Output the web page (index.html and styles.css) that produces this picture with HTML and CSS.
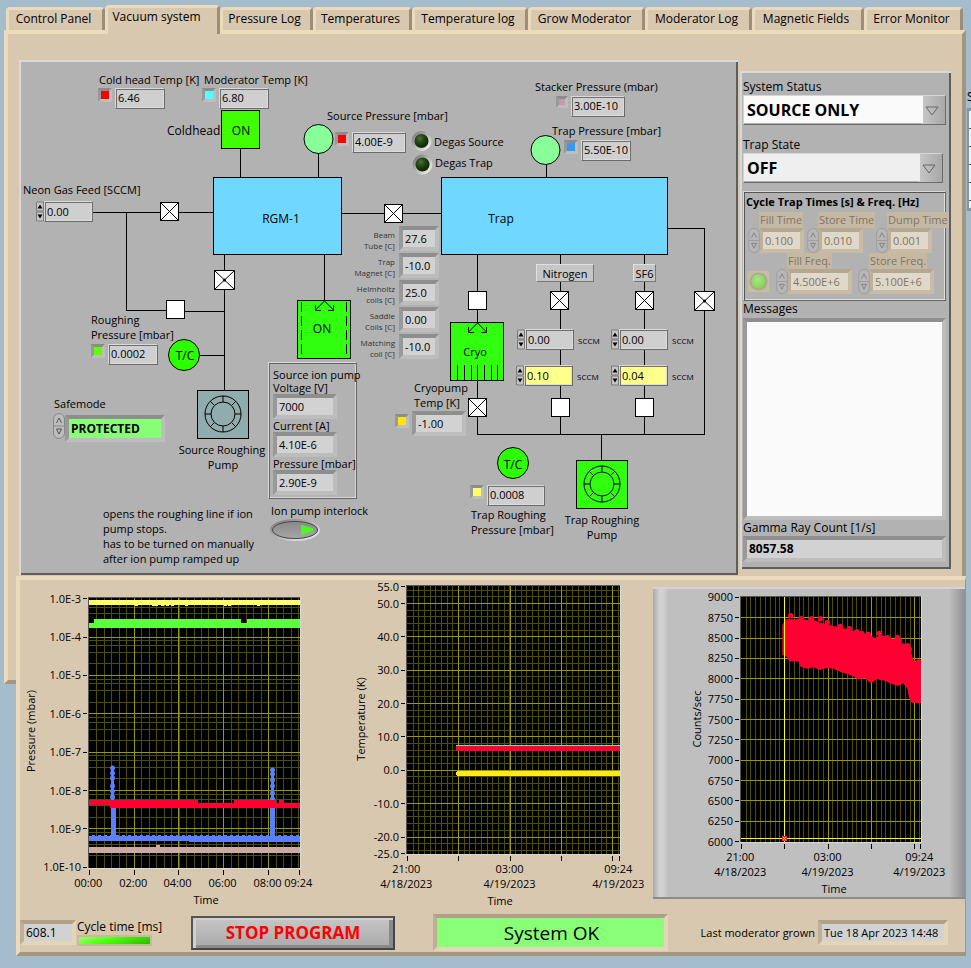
FILE: index.html
```html
<!DOCTYPE html>
<html lang="en">
<head>
<meta charset="utf-8">
<title>Vacuum system</title>
<link rel="stylesheet" href="styles.css">
</head>
<body>
<svg width="0" height="0" class="defs" aria-hidden="true">
  <defs>
    <symbol id="valve" viewBox="0 0 20 20"><rect class="crisp" x=".5" y=".5" width="18" height="18" fill="#fff" stroke="#000"/></symbol>
    <symbol id="valve-x" viewBox="0 0 20 20"><rect class="crisp" x=".5" y=".5" width="18" height="18" fill="#fff" stroke="#000"/><path d="M1 1 18 18M18 1 1 18" stroke="#000"/></symbol>
    <symbol id="valve-hub" viewBox="0 0 22 22"><rect class="crisp" x=".5" y=".5" width="20" height="19" fill="#fff" stroke="#000"/><path d="M1 1 20 19M20 1 1 19" stroke="#000"/><circle cx="10.500" cy="10" r="1.500"/></symbol>
    <symbol id="rotor" viewBox="-20 -20 40 40"><g fill="none" stroke="#000"><circle r="18"/><circle r="12"/><path d="M0-18V-12M0 18V12M-18 0H-12M18 0H12M-13-13-9-9M13-13 9-9M-13 13-9 9M13 13 9 9"/></g></symbol>
    <symbol id="spin" viewBox="0 0 12 26"><rect x=".5" y=".5" width="11" height="25" rx="5.5" fill="#bcbcbc" stroke="#888"/><path d="M1 13H11" stroke="#888"/><path d="M3.500 10 6 5 8.500 10M3.500 16 6 21 8.500 16Z" fill="none" stroke="#555"/></symbol>
    <symbol id="step" viewBox="0 0 8 20"><path d="M0 0H8V20H0Z" fill="#c6c6c6"/><path d="M.5.5H7.500V9.500H.5ZM.5 10.500H7.500V19.500H.5Z" fill="none" stroke="#777"/><path d="M1.500 7 4 3 6.500 7ZM1.500 13 4 17 6.500 13Z"/></symbol>
    <radialGradient id="led-dark" cx=".4" cy=".35"><stop offset="0" stop-color="#4c7040"/><stop offset=".5" stop-color="#24480f"/><stop offset="1" stop-color="#102c04"/></radialGradient>
    <radialGradient id="led-on" cx=".45" cy=".4"><stop offset="0" stop-color="#a8e880"/><stop offset="1" stop-color="#86d25c"/></radialGradient>
    <linearGradient id="rim" x1="0" y1="0" x2="1" y2="1"><stop offset="0" stop-color="#777"/><stop offset="1" stop-color="#f4f4f4"/></linearGradient>
    <linearGradient id="knob" x1="0" y1="0" x2="0" y2="1"><stop offset="0" stop-color="#858585"/><stop offset="1" stop-color="#aaa"/></linearGradient>
  </defs>
</svg>

<div class="window">
  <nav class="tabs" role="tablist">
    <button type="button" role="tab">Control Panel</button>
    <button type="button" role="tab" class="active" aria-selected="true">Vacuum system</button>
    <button type="button" role="tab">Pressure Log</button>
    <button type="button" role="tab">Temperatures</button>
    <button type="button" role="tab">Temperature log</button>
    <button type="button" role="tab">Grow Moderator</button>
    <button type="button" role="tab">Moderator Log</button>
    <button type="button" role="tab">Magnetic Fields</button>
    <button type="button" role="tab">Error Monitor</button>
  </nav>

  <main class="tab-page">
    <section class="schematic">
      <svg class="piping" viewBox="19 60 719 515" width="719" height="515">
        <g class="pipes">
          <path d="M240.500 148V178M318.500 153V178M93 212.500H213M126.500 212V310.500H170M184 311.500H224M342 213.500H441M224.500 254V391M324.500 254V301M199 355.500H224M546.500 164V178M667 228.500H704.500V434.500H477.500V254M560.500 254V434M644.500 254V434M601.500 434V460"/>
        </g>
        <g class="boxes">
          <rect x="221.500" y="110.500" width="38" height="38" fill="#40ff00"/>
          <rect x="213.500" y="177.500" width="128" height="77" fill="#70d8ff"/>
          <rect x="441.500" y="177.500" width="226" height="77" fill="#70d8ff"/>
          <rect x="297.500" y="300.500" width="53" height="58" fill="#30ff10"/>
          <rect x="197.500" y="390.500" width="51" height="48" fill="#90acac"/>
          <rect x="450.500" y="322.500" width="53" height="58" fill="#30ff10"/>
          <rect x="576.500" y="460.500" width="51" height="48" fill="#30ff10"/>
        </g>
        <g class="marks">
          <path d="M301.500 302V358M346.500 302V358" stroke-dasharray="10 4"/>
          <path d="M457.500 365V380M464.500 365V380M471.500 365V380M477.500 365V380M484.500 365V380M491.500 365V380M497.500 365V380"/>
        </g>
        <g class="arrows">
          <path d="M324.500 301 315.500 310M324.500 301 333.500 310M315.500 305V310.500H321M333.500 305V310.500H328"/>
          <path d="M477.500 323 468.500 332M477.500 323 486.500 332M468.500 327V332.500H474M486.500 327V332.500H481"/>
        </g>
        <g class="gauges">
          <circle cx="318.500" cy="139" r="14.500" fill="#88ff99"/>
          <circle cx="545.500" cy="150" r="14.500" fill="#88ff99"/>
          <circle cx="184" cy="355" r="15.500" fill="#2cff00"/>
          <circle cx="513" cy="463" r="15.500" fill="#2cff00"/>
        </g>
        <use href="#valve-x" x="160" y="202" width="20" height="20"/>
        <use href="#valve-x" x="384" y="204" width="20" height="20"/>
        <use href="#valve-hub" x="214" y="270" width="22" height="22"/>
        <use href="#valve" x="166" y="300" width="20" height="20"/>
        <use href="#valve" x="468" y="291" width="20" height="20"/>
        <use href="#valve-x" x="550" y="291" width="20" height="20"/>
        <use href="#valve-x" x="635" y="291" width="20" height="20"/>
        <use href="#valve-hub" x="694" y="291" width="22" height="22"/>
        <use href="#valve-x" x="468" y="398" width="20" height="20"/>
        <use href="#valve" x="551" y="398" width="20" height="20"/>
        <use href="#valve" x="635" y="398" width="20" height="20"/>
        <use href="#rotor" x="203" y="394" width="40" height="40"/>
        <use href="#rotor" x="582" y="464" width="40" height="40"/>
        <g stroke="url(#rim)" stroke-width="3" fill="url(#led-dark)"><circle cx="421.500" cy="141" r="8.500"/><circle cx="422.500" cy="164.500" r="8.500"/></g>
        <g class="names">
          <text class="big" x="167" y="135">Coldhead</text>
          <text class="big" x="241" y="135" text-anchor="middle">ON</text>
          <text class="big" x="281" y="223" text-anchor="middle">RGM-1</text>
          <text class="big" x="501" y="223" text-anchor="middle">Trap</text>
          <text class="big" x="322" y="333" text-anchor="middle">ON</text>
          <text x="475" y="356" text-anchor="middle">Cryo</text>
          <text class="big" x="185" y="360" text-anchor="middle">T/C</text>
          <text class="big" x="513" y="469" text-anchor="middle">T/C</text>
          <text x="434" y="146">Degas Source</text>
          <text x="435" y="167">Degas Trap</text>
          <text x="222" y="454" text-anchor="middle">Source Roughing</text>
          <text x="223" y="469" text-anchor="middle">Pump</text>
          <text x="602" y="524" text-anchor="middle">Trap Roughing</text>
          <text x="602" y="539" text-anchor="middle">Pump</text>
        </g>
      </svg>

      <label class="at l-cold" for="v-cold">Cold head Temp [K]</label>
      <div class="at reading r-cold"><i class="swatch red"></i><output id="v-cold" class="box">6.46</output></div>
      <label class="at l-mod" for="v-mod">Moderator Temp [K]</label>
      <div class="at reading r-mod"><i class="swatch cyan"></i><output id="v-mod" class="box">6.80</output></div>
      <label class="at l-src" for="v-src">Source Pressure [mbar]</label>
      <div class="at reading r-src"><i class="swatch red"></i><output id="v-src" class="box wide">4.00E-9</output></div>
      <label class="at l-stack" for="v-stack">Stacker Pressure (mbar)</label>
      <div class="at reading r-stack"><i class="swatch small mauve"></i><output id="v-stack" class="box wide">3.00E-10</output></div>
      <label class="at l-trap" for="v-trap">Trap Pressure [mbar]</label>
      <div class="at reading r-trap"><i class="swatch blue"></i><output id="v-trap" class="box">5.50E-10</output></div>
      <label class="at l-neon" for="v-neon">Neon Gas Feed [SCCM]</label>
      <div class="at stepper r-neon"><svg><use href="#step"/></svg><input id="v-neon" class="box" value="0.00"></div>
      <label class="at l-rough" for="v-rough">Roughing<br>Pressure [mbar]</label>
      <div class="at reading r-rough"><i class="swatch lime"></i><output id="v-rough" class="box">0.0002</output></div>
      <label class="at l-safe" for="v-safe">Safemode</label>
      <div class="at safe r-safe"><svg><use href="#spin"/></svg><input id="v-safe" class="well" value="PROTECTED"></div>

      <fieldset class="at ion">
        <div class="ion-title">Source ion pump</div>
        <label for="v-volt">Voltage [V]</label><output id="v-volt" class="well">7000</output>
        <label for="v-curr">Current [A]</label><output id="v-curr" class="well">4.10E-6</output>
        <label for="v-pres">Pressure [mbar]</label><output id="v-pres" class="well">2.90E-9</output>
      </fieldset>
      <label class="at l-lock" for="v-lock">Ion pump interlock</label>
      <button class="at lock" id="v-lock" type="button" aria-label="Ion pump interlock">
        <svg viewBox="0 0 50 22"><ellipse cx="25" cy="11" rx="24" ry="10" fill="url(#knob)" stroke="url(#rim)" stroke-width="2"/><ellipse cx="25" cy="11" rx="22.500" ry="8.500" fill="none" stroke="#4a4a4a"/><path d="M31 6 43 9V12L31 16Z" fill="#4df81c"/></svg>
      </button>

      <p class="at note">opens the roughing line if ion<br>pump stops.<br>has to be turned on manually<br>after ion pump ramped up</p>

      <div class="at coils">
        <label for="t1">Beam<br>Tube [C]</label><output id="t1" class="well">27.6</output>
        <label for="t2">Trap<br>Magnet [C]</label><output id="t2" class="well">-10.0</output>
        <label for="t3">Helmholtz<br>coils [C]</label><output id="t3" class="well">25.0</output>
        <label for="t4">Saddle<br>Coils [C]</label><output id="t4" class="well">0.00</output>
        <label for="t5">Matching<br>coil [C]</label><output id="t5" class="well">-10.0</output>
      </div>

      <button type="button" class="at gas nitrogen">Nitrogen</button>
      <button type="button" class="at gas sf6">SF6</button>
      <div class="at stepper n-read"><svg><use href="#step"/></svg><input id="n1" class="box" value="0.00"><label for="n1">SCCM</label></div>
      <div class="at stepper n-set"><svg><use href="#step"/></svg><input id="n2" class="box set" value="0.10"><label for="n2">SCCM</label></div>
      <div class="at stepper s-read"><svg><use href="#step"/></svg><input id="s1" class="box" value="0.00"><label for="s1">SCCM</label></div>
      <div class="at stepper s-set"><svg><use href="#step"/></svg><input id="s2" class="box set" value="0.04"><label for="s2">SCCM</label></div>

      <label class="at l-cryo" for="v-cryo">Cryopump<br>Temp [K]</label>
      <div class="at reading r-cryo"><i class="swatch gold"></i><output id="v-cryo" class="well">-1.00</output></div>
      <div class="at reading r-tr"><i class="swatch straw"></i><output id="v-tr" class="box wider">0.0008</output></div>
      <label class="at l-tr" for="v-tr">Trap Roughing<br>Pressure [mbar]</label>
    </section>

    <aside class="status">
      <label for="sys">System Status</label>
      <div class="drop"><select id="sys"><option>SOURCE ONLY</option></select><svg viewBox="0 0 14 10"><path d="M1 1H13L7 9Z"/></svg></div>
      <label class="spaced" for="state">Trap State</label>
      <div class="drop short"><select id="state"><option>OFF</option></select><svg viewBox="0 0 14 10"><path d="M1 1H13L7 9Z"/></svg></div>
      <fieldset class="cycle" disabled>
        <h2>Cycle Trap Times [s] &amp; Freq. [Hz]</h2>
        <div class="cycle-row times">
          <div class="dim"><label for="c1">Fill Time</label><svg><use href="#spin"/></svg><input id="c1" class="well" value="0.100"></div>
          <div class="dim"><label for="c2">Store Time</label><svg><use href="#spin"/></svg><input id="c2" class="well" value="0.010"></div>
          <div class="dim"><label for="c3">Dump Time</label><svg><use href="#spin"/></svg><input id="c3" class="well" value="0.001"></div>
        </div>
        <div class="cycle-row freqs">
          <svg class="led" viewBox="0 0 22 22"><path d="M0 0H22V22H0Z" fill="#c6bda8"/><circle cx="11" cy="11" r="8.500" fill="url(#led-on)" stroke="#b3a78e" stroke-width="2"/></svg>
          <div class="dim"><label for="c4">Fill Freq.</label><svg><use href="#spin"/></svg><input id="c4" class="well" value="4.500E+6"></div>
          <div class="dim"><label for="c5">Store Freq.</label><svg><use href="#spin"/></svg><input id="c5" class="well" value="5.100E+6"></div>
        </div>
      </fieldset>
      <label for="msg">Messages</label>
      <textarea id="msg" class="well"></textarea>
      <label for="gamma">Gamma Ray Count [1/s]</label>
      <output id="gamma" class="well gamma">8057.58</output>
    </aside>
  </main>

  <section class="lower">
    <div class="charts">
      <svg id="pressure" class="chart" viewBox="20 580 330 330"></svg>
      <svg id="temperature" class="chart" viewBox="350 580 303 330"></svg>
      <div class="counts-panel"><svg id="counts" class="chart" viewBox="653 587 312 312"></svg></div>
    </div>
    <footer class="bar">
      <output id="cyc" class="well cyc">608.1</output>
      <div class="cycle-time"><label for="cyc">Cycle time [ms]</label><i class="lamp"></i></div>
      <button type="button" class="stop">STOP PROGRAM</button>
      <output class="well ok">System OK</output>
      <label for="grown" class="grown-label">Last moderator grown</label>
      <output id="grown" class="well grown">Tue 18 Apr 2023 14:48</output>
    </footer>
  </section>

  <div class="offside"><span>S</span><i></i></div>
</div>
<script src="charts.js"></script>
</body>
</html>
```
FILE: charts.js
```js
const NS = "http://www.w3.org/2000/svg";
const MAJOR = "#999900", MINOR = "#4f4f00";

function el(parent, name, attrs, text) {
  const n = document.createElementNS(NS, name);
  for (const k in attrs) n.setAttribute(k, attrs[k]);
  if (text) n.textContent = text;
  parent.appendChild(n);
  return n;
}
const bar = (s, x1, x2, y1, y2, fill) =>
  el(s, "rect", { x: x1, y: y1, width: x2 - x1, height: y2 - y1, fill });

function frame(svg, c) {
  const { x, y, r, b } = c;
  bar(svg, x - 1, r + 1, y - 1, b + 1, "#d8d8d8");
  bar(svg, x - 1, r, y - 1, b, "#555");
  bar(svg, x, r, y, b, "#000");
  const v = (p, col) => bar(svg, Math.floor(p), Math.floor(p) + 1, y, b, col);
  const h = (p, col) => bar(svg, x, r, Math.floor(p), Math.floor(p) + 1, col);
  c.yMinor.forEach(p => h(p, MINOR));
  for (let p = c.x0 + c.xMinor; p < r - 1; p += c.xMinor) v(p, MINOR);
  c.xMajor.forEach(p => v(p, MAJOR));
  c.yTicks.forEach(([p]) => { if (p > y + 3 && p < b - 3) h(p, MAJOR); });
  c.yTicks.forEach(([p, t]) => {
    bar(svg, x - 6, x - 2, Math.floor(p), Math.floor(p) + 1, "#000");
    el(svg, "text", { x: x - 8, y: Math.round(p) + 4, "text-anchor": "end" }, t);
  });
  c.xTicks.forEach(([p, a, d]) => {
    bar(svg, Math.floor(p), Math.floor(p) + 1, b + 2, b + 7, "#000");
    if (a) el(svg, "text", { x: p - 1, y: b + 19, "text-anchor": "middle" }, a);
    if (d) el(svg, "text", { x: p - 1, y: b + 34, "text-anchor": "middle" }, d);
  });
  el(svg, "text", { x: c.title[0], y: c.title[1], "text-anchor": "middle" }, "Time");
  el(svg, "text", { transform: `translate(${c.side[0]} ${c.side[1]}) rotate(-90)`, "text-anchor": "middle", class: "axis" }, c.sideText);
}

/* Pressure, logarithmic */
{
  const s = document.getElementById("pressure");
  const yTicks = [], yMinor = [];
  for (let i = 0; i < 8; i++) {
    const p = 598.7 + i * 38.37;
    yTicks.push([p, "1.0E-" + (i + 3)]);
    if (i < 7) [2, 4, 6, 8].forEach(m => yMinor.push(p + 38.37 * (1 - Math.log10(m))));
  }
  frame(s, { x: 89, y: 598, r: 300, b: 868, x0: 89.3, xMinor: 7.48, xMajor: [134.3, 178.5, 223.5, 268.5], yTicks, yMinor,
    xTicks: [[89.3, "00:00"], [134.3, "02:00"], [178.5, "04:00"], [223.5, "06:00"], [268.5, "08:00"], [299.3, "09:24"]],
    title: [206, 904], side: [35, 731], sideText: "Pressure (mbar)" });
  bar(s, 89, 300, 600, 605, "#ffff66");
  [135, 152, 155, 161, 166, 171, 185, 224, 228, 257].forEach(x => bar(s, x, x + 3, 605, 606, "#ffff66"));
  bar(s, 89, 300, 623, 628, "#5cff3c");
  bar(s, 94, 241, 619, 624, "#5cff3c");
  bar(s, 247, 300, 619, 624, "#5cff3c");
  bar(s, 89, 300, 847, 853, "#cbaba3");
  bar(s, 156, 160, 845, 847, "#cbaba3");
  bar(s, 89, 300, 836, 841, "#5a80ff");
  bar(s, 189, 300, 840, 842, "#5a80ff");
  for (let x = 92; x < 298; x += 6) bar(s, x, x + 3, 835, 836, "#5a80ff");
  bar(s, 111, 114, 768, 800, "#5a80ff");
  bar(s, 111, 116, 805, 838, "#5a80ff");
  bar(s, 271, 274, 770, 812, "#5a80ff");
  bar(s, 270, 275, 800, 838, "#5a80ff");
  [[112.5, [768, 773, 778, 786, 791, 797]], [272.5, [770, 774, 780, 786, 793, 799, 814, 823, 831]]].forEach(([x, ys]) =>
    ys.forEach(cy => el(s, "circle", { cx: x, cy, r: 2.5, fill: "#5a80ff" })));
  bar(s, 89, 198, 800, 805, "#ff0033");
  bar(s, 110, 300, 803, 808, "#ff0033");
  bar(s, 234, 276, 800, 805, "#ff0033");
  bar(s, 279, 284, 800, 805, "#ff0033");
}

/* Temperature */
{
  const s = document.getElementById("temperature");
  const at = v => 770.3 - v * 3.335;
  const yTicks = [55, 50, 40, 30, 20, 10, 0, -10, -20, -25].map(v => [at(v), v.toFixed(1)]);
  const yMinor = [];
  for (let v = -24; v <= 54; v += 2) yMinor.push(at(v));
  frame(s, { x: 407, y: 586, r: 620, b: 854, x0: 407.3, xMinor: 5.7, xMajor: [458.5, 510.5, 561.5, 612.5], yTicks, yMinor,
    xTicks: [[407.3, "21:00", "4/18/2023"], [458.5], [510.5, "03:00", "4/19/2023"], [561.5], [612.5], [619.3, "09:24", "4/19/2023"]],
    title: [500, 905], side: [365, 719], sideText: "Temperature (K)" });
  bar(s, 456, 620, 745, 747, "#60e8c0");
  bar(s, 457, 620, 746, 751, "#ff0033");
  bar(s, 456, 459, 746, 750, "#ff0033");
  bar(s, 457, 620, 771, 776, "#ffe81a");
  bar(s, 456, 458, 772, 775, "#ffe81a");
}

/* Gamma counts */
{
  const s = document.getElementById("counts");
  const yTicks = [];
  for (let v = 9000; v >= 6000; v -= 250) yTicks.push([597.3 + (9000 - v) * 0.08147, String(v)]);
  frame(s, { x: 741, y: 597, r: 921, b: 842, x0: 741.3, xMinor: 4.82, xMajor: [828.5, 871.5, 914.5], yTicks, yMinor: [],
    xTicks: [[741.3, "21:00", "4/18/2023"], [784.5], [828.5, "03:00", "4/19/2023"], [871.5], [914.5], [920.3, "09:24", "4/19/2023"]],
    title: [834, 893], side: [701, 719], sideText: "Counts/sec" });
  const edge = [427,165,436,148,470,148,484,143,500,150,515,148,540,158,560,162,580,168,600,172,628,180,650,184,670,190,685,193,705,205,718,195,742,200,760,208,775,205,785,220,803,222,812,240,820,272,843,270,
    843,400,815,398,806,380,803,358,790,340,775,348,755,342,735,332,710,328,692,340,675,325,652,328,638,318,600,305,580,296,560,294,540,300,520,292,500,296,482,290,476,275,448,274,440,260,427,255];
  const pts = [];
  for (let i = 0; i < edge.length; i += 2) pts.push((640 + edge[i] / 3) + "," + (570 + edge[i + 1] / 3));
  el(s, "polygon", { points: pts.join(" "), fill: "#ff0033" });
  [[452, 137], [484, 146], [515, 146], [541, 146], [562, 158], [601, 169], [628, 176], [650, 185], [665, 190], [685, 193], [718, 190], [742, 203], [772, 202], [778, 212], [803, 227], [808, 238], [836, 276]]
    .forEach(([x, y]) => el(s, "circle", { cx: 640 + x / 3, cy: 570 + y / 3, r: 2.7, fill: "#ff0033" }));
  bar(s, 784, 785, 597, 842, "#ffff00");
  bar(s, 741, 921, 838, 839, "#ffff00");
  bar(s, 782, 787, 836, 841, "#ff2030");
  [[783, 837], [785, 837], [784, 838], [783, 839], [785, 839]].forEach(([x, y]) => bar(s, x, x + 1, y, y + 1, "#ffc040"));
}
```
FILE: styles.css
```css
* { box-sizing: border-box; }
body {
  margin: 0;
  overflow: hidden;
  background: #a4bccb;
  color: #000;
  font: 12px/16px "Open Sans", "Noto Sans", sans-serif;
}
button, input, select, textarea { font: inherit; color: inherit; margin: 0; border-radius: 0; }
fieldset, h2, p { margin: 0; padding: 0; border: 0; min-width: 0; }
label { white-space: nowrap; }
.defs { position: absolute; }
.crisp { shape-rendering: crispEdges; }
.window { position: relative; min-height: 100vh; padding: 5px 5px 0 4px; }

/* Tabs */
.tabs {
  display: grid;
  grid-template-columns: 99fr 115fr 93fr 99fr 116fr 117fr 107fr 112fr 99fr;
  align-items: end;
  padding: 0 3px 0 2px;
}
.tabs button {
  height: 23px;
  padding: 0 4px 2px 0;
  border: solid;
  border-width: 3px 3px 0;
  border-color: #ecdabd #9c8e78 #ecdabd #ecdabd;
  border-radius: 4px 4px 0 0;
  background: #d8c8af;
  white-space: nowrap;
}
.tabs .active { height: 29px; margin-bottom: -4px; padding: 0 12px 8px 0; position: relative; }

.tab-page {
  display: grid;
  grid-template-columns: 1fr 211px;
  align-items: start;
  gap: 2px;
  padding: 26px 11px 105px;
  border: 4px solid;
  border-color: #ecdabd #a3957f #a3957f #ecdabd;
  background: #d8c8af;
}

/* Boxes shared by readings and controls */
.box {
  display: block;
  width: 50px;
  height: 21px;
  padding: 0 0 0 2px;
  border: 1px solid;
  border-color: #d9d9d9 #6b6b6b #6b6b6b #d9d9d9;
  box-shadow: inset 1px 1px #707070, inset -1px -1px #dcdcdc;
  background: #cfcfcf;
  font-size: 11px;
  line-height: 18px;
  white-space: nowrap;
}
.wide { width: 54px; }
.wider { width: 58px; }
.box.set { background: #ffff8c; }
.well {
  display: block;
  height: 25px;
  padding: 0 0 0 2px;
  border: 4px solid;
  border-color: #8e8e8e #bdbdbd #bdbdbd #999;
  background: #d2d2d2;
  font-size: 11px;
  line-height: 17px;
  white-space: nowrap;
}
.swatch {
  width: 14px;
  height: 14px;
  flex: none;
  border: 3px solid;
  border-color: #8c8c8c #bebebe #bebebe #999;
}
.small { width: 12px; height: 12px; }
.red { background: #f00; }
.cyan { background: #5ff; }
.mauve { background: #c898b0; }
.blue { background: #3399ff; }
.lime { background: #60ff00; }
.gold { background: #ffe600; }
.straw { background: #ffff66; }

/* Process diagram */
.schematic {
  position: relative;
  background: #b2b2b2;
  box-shadow: inset 2px 2px #d9d9d9, inset -2px -2px #5e5e5e;
  font-size: 11px;
}
.piping { display: block; }
.big { font-size: 12px; }
.pipes path, .marks path { fill: none; stroke: #000; shape-rendering: crispEdges; }
.boxes rect { stroke: #000; shape-rendering: crispEdges; }
.arrows path { fill: none; stroke: #000; }
.gauges circle { stroke: #000; }
.at { position: absolute; }
.reading { display: flex; gap: 3px; }
.stepper { display: flex; }
.stepper svg { width: 8px; height: 21px; flex: none; }
.stepper label { margin-left: 4px; align-self: center; font-size: 8px; padding-top: 2px; }
.stepper .box { width: 49px; }

.l-cold { left: 80px; top: 12px; }
.r-cold { left: 79px; top: 28px; }
.l-mod { left: 185px; top: 12px; }
.r-mod { left: 183px; top: 28px; }
.l-src { left: 308px; top: 48px; }
.r-src { left: 316px; top: 72px; }
.l-stack { left: 516px; top: 19px; }
.r-stack { left: 537px; top: 36px; }
.l-trap { left: 533px; top: 63px; }
.r-trap { left: 545px; top: 80px; }
.l-neon { left: 4px; top: 122px; }
.r-neon { left: 17px; top: 141px; }
.l-rough { left: 72px; top: 252px; line-height: 15px; }
.r-rough { left: 72px; top: 284px; }
.l-safe { left: 35px; top: 336px; }
.r-safe { left: 34px; top: 353px; }
.l-lock { left: 252px; top: 443px; }
.l-cryo { left: 395px; top: 320px; line-height: 15px; }
.r-cryo { left: 376px; top: 351px; }
.r-cryo .swatch { margin-top: 3px; }
.r-cryo .well { width: 54px; }
.r-tr { left: 451px; top: 425px; }
.l-tr { left: 452px; top: 447px; line-height: 15px; }
.n-read { left: 498px; top: 269px; }
.n-set { left: 497px; top: 305px; }
.s-read { left: 592px; top: 269px; }
.s-set { left: 592px; top: 305px; }

.safe { display: flex; }
.safe svg { width: 12px; height: 26px; flex: none; }
.safe .well { width: 100px; height: 27px; margin-top: 2px; background: #88ff77; font-size: 12px; font-weight: bold; }

.ion {
  left: 249px;
  top: 302px;
  width: 89px;
  height: 137px;
  padding: 6px 0 0 4px;
  border: 1px solid;
  border-color: #d9d9d9 #666 #666 #d9d9d9;
  box-shadow: inset 1px 1px #666, inset -1px -1px #d9d9d9;
}
.ion-title { white-space: nowrap; line-height: 12px; }
.ion label { display: block; height: 13px; line-height: 13px; }
.ion .well { width: 64px; }
.lock { left: 251px; top: 459px; width: 50px; height: 22px; padding: 0; border: 0; background: none; }
.lock svg { display: block; }
.note { left: 84px; top: 446px; line-height: 15px; white-space: nowrap; }

.coils {
  left: 332px;
  top: 166px;
  display: grid;
  grid-template-columns: 44px 40px;
  gap: 2px 4px;
  text-align: right;
  font-size: 8px;
  line-height: 11px;
  color: #333;
}
.coils label { justify-self: end; padding-top: 3px; }
.coils .well { color: #000; text-align: left; }

.gas { height: 18px; padding: 0; border: 1px solid; border-color: #e0e0e0 #777 #777 #e0e0e0; background: #c6c6c6; line-height: 15px; }
.nitrogen { left: 517px; top: 204px; width: 58px; }
.sf6 { left: 614px; top: 204px; width: 23px; }

/* Status column */
.status {
  margin-top: 11px;
  padding: 8px 5px 7px 3px;
  background: #b2b2b2;
  box-shadow: inset 2px 2px #d9d9d9, inset -2px -2px #5e5e5e;
}
.status > label { display: block; }
.status > .spaced { margin-top: 12px; }
.drop {
  position: relative;
  height: 30px;
  border: 1px solid;
  border-color: #d5d5d5 #6b6b6b #6b6b6b #d5d5d5;
  background: linear-gradient(90deg, #c8c8c8, #a8a8a8) right / 24px 100% no-repeat;
}
.drop select {
  width: calc(100% - 22px);
  height: 27px;
  padding: 0 0 0 3px;
  border: 0;
  appearance: none;
  background: #fafafa;
  font-size: 16px;
  font-weight: bold;
}
.drop svg { position: absolute; right: 6px; top: 10px; width: 14px; height: 10px; fill: none; stroke: #666; pointer-events: none; }
.short { width: 200px; }
.short select { background: #efefef; }

.cycle {
  height: 110px;
  margin: 8px 0 0;
  padding: 2px 0 0 2px;
  border: 1px solid;
  border-color: #d9d9d9 #666 #666 #d9d9d9;
  box-shadow: inset 1px 1px #555, inset -1px -1px #e0e0e0;
  font-size: 11px;
}
.cycle h2 { font-size: 11px; line-height: 16px; white-space: nowrap; }
.cycle-row { display: flex; padding-left: 2px; }
.times { gap: 4px; padding-top: 2px; }
.freqs { gap: 7px; }
.dim { display: grid; grid-template-columns: 11px auto; color: #807566; }
.dim label { grid-column: 2; justify-self: start; padding: 0 1px; background: #c6b9a3; line-height: 16px; white-space: nowrap; }
.times .dim { width: 55px; }
.times .dim:nth-child(2) { width: 65px; }
.dim svg { width: 12px; height: 25px; opacity: .5; }
.dim .well { width: 45px; background: #e0d8c8; border-color: #b5a893 #c9bca6 #c9bca6 #bdb19b; }
.freqs .dim { width: 75px; }
.freqs .well { width: 65px; }
.led { width: 21px; height: 21px; align-self: end; margin-bottom: 2px; flex: none; }
.status textarea { width: 100%; height: 202px; margin-top: 1px; resize: none; background: #fafafa; }
.gamma { height: 26px; font-size: 12px; font-weight: bold; }

/* Charts and footer */
.lower {
  position: relative;
  margin: -108px 0 0 12px;
  border: 4px solid;
  border-color: #ecdabd #a3957f #a3957f #ecdabd;
  border-right-width: 1px;
  background: #d8c8af;
}
.charts { display: grid; grid-template-columns: 330fr 303fr 312fr; align-items: start; }
.chart { display: block; width: 100%; }
.chart text { font-size: 11px; }
.counts-panel {
  margin-top: 7px;
  background: linear-gradient(90deg, #a8a8a8, #d2d2d2 2%, #d2d2d2 3%, #bfbfbf 5%, #bfbfbf 95%, #909090);
  box-shadow: inset 0 2px #d4d4d4, inset 0 -2px #8b8b8b;
}
.bar { display: flex; align-items: center; height: 42px; padding-top: 3px; }
.lower .well { border-color: #b0a087 #e4d4b9 #e4d4b9 #bfaf96; }
.cyc { width: 56px; font-size: 12px; }
.cycle-time { margin-left: 1px; width: 114px; }
.cycle-time label { display: block; }
.lamp { display: block; width: 75px; height: 11px; border: 2px solid #c8b89e; background: linear-gradient(160deg, #a0ff70, #50ff10 40%, #30b800); }
.stop {
  width: 204px;
  height: 34px;
  border: 2px solid;
  border-color: #555 #444 #444 #555;
  box-shadow: inset 3px 2px #d0d0d0, inset -4px -3px #8a8a8a;
  background: linear-gradient(#c6c6c6, #aaa);
  color: #f00;
  font-size: 17px;
  font-weight: bold;
}
.lower .ok { width: 235px; height: 37px; margin-left: 38px; background: #88ff77; font-size: 19px; line-height: 30px; text-align: center; }
.grown-label { margin-left: auto; font-size: 11px; }
.grown { width: 130px; margin: 0 17px 0 3px; }

/* Neighbouring control, cut off by the window edge */
.offside { position: absolute; right: 0; top: 89px; width: 4px; overflow: hidden; }
.offside i { display: block; height: 103px; margin-top: 3px; border: solid #8098a5; border-width: 3px 0 3px 2px; background: repeating-linear-gradient(#f5f5f5 0 17px, #555 17px 18px); }
```
